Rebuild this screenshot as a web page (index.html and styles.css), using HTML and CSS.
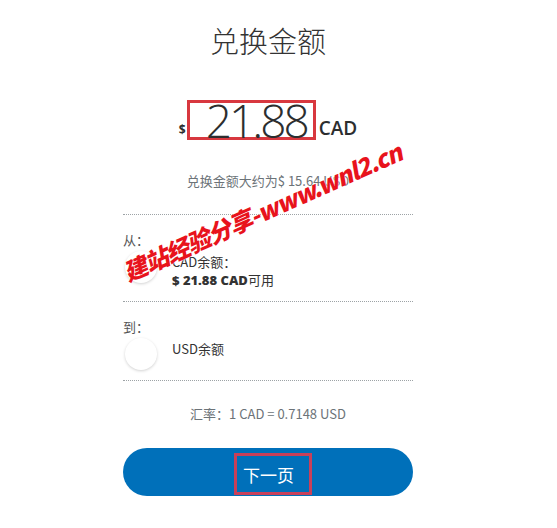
FILE: index.html
```html
<!DOCTYPE html>
<html lang="zh-CN">

<head>
    <meta charset="UTF-8">
    <meta name="viewport" content="width=device-width, initial-scale=1.0">
    <title>兑换金额</title>
    <link rel="stylesheet" href="styles.css">
</head>

<body>
    <div class="container">

        <!-- title -->
        <h1 class="title">兑换金额</h1>

        <!-- amount -->
        <div class="amount">
            <span class="currency-sign">$</span>
            <span class="amount-value mark">21.88</span>
            <span class="currency-code">CAD</span>
        </div>
        <p class="estimate">兑换金额大约为$ 15.64 USD</p>

        <!-- from -->
        <div class="section">
            <p class="label">从：</p>
            <div class="balance">
                <span class="flag"></span>
                <div class="balance-text">
                    <span>CAD余额：</span>
                    <span class="available"><strong>$ 21.88 CAD</strong>可用</span>
                </div>
            </div>
        </div>

        <!-- to -->
        <div class="section">
            <p class="label">到：</p>
            <div class="balance">
                <span class="flag"></span>
                <div class="balance-text">
                    <span>USD余额</span>
                </div>
            </div>
        </div>

        <p class="rate">汇率：1 CAD = 0.7148 USD</p>

        <!-- next button -->
        <button class="next-button" type="button"><span class="mark">下一页</span></button>

        <!-- watermark -->
        <div class="watermark">建站经验分享-www.wnl2.cn</div>
    </div>
</body>

</html>
```

FILE: styles.css
```css
body {
    margin: 0;
    background: #fff;
    font-family: 'Noto Sans CJK SC', 'Open Sans', sans-serif;
    color: #2c2e2f;
}

.container {
    position: relative;
    width: 290px;
    margin-left: 123px;
    padding-top: 18px;
}

.title {
    margin: 0;
    height: 44px;
    font-size: 29px;
    font-weight: 300;
    line-height: 44px;
    text-align: center;
    color: #333;
}

.amount {
    display: flex;
    justify-content: center;
    align-items: baseline;
    margin-top: 38px;
    height: 40px;
    font-family: 'Open Sans', sans-serif;
}

.currency-sign {
    font-size: 12px;
    font-weight: 700;
    margin-right: 1px;
    position: relative;
    top: -4px;
}

.amount-value {
    font-size: 46px;
    font-weight: 300;
    line-height: 34px;
    padding: 0 6px 0 16px;
    letter-spacing: -3px;
}

.currency-code {
    font-size: 19px;
    font-weight: 600;
    margin-left: 3px;
    position: relative;
    top: -3px;
}

/* red highlight box */
.mark {
    border: 3px solid #d8383f;
}

.estimate {
    margin: 32px 0 0;
    padding-bottom: 24px;
    font-size: 13px;
    line-height: 18px;
    text-align: center;
    color: #6c7378;
    border-bottom: 1px dotted #9da3a6;
}

.section {
    padding: 16px 0 12px;
    border-bottom: 1px dotted #9da3a6;
}

.section + .section {
    padding-bottom: 10px;
}

.label {
    margin: 0 0 2px;
    font-size: 13px;
    line-height: 18px;
    color: #555;
}

.balance {
    display: flex;
    align-items: flex-start;
    gap: 15px;
    padding-left: 2px;
}

.flag {
    flex: none;
    width: 32px;
    height: 32px;
    border-radius: 50%;
    background: #fff;
    box-shadow: 0 1px 3px rgba(0, 0, 0, 0.18);
}

.balance-text {
    display: flex;
    flex-direction: column;
    padding-top: 2px;
    font-size: 13px;
    line-height: 18px;
    color: #333;
}

.available strong {
    font-family: 'Open Sans', sans-serif;
    font-weight: 800;
}

.rate {
    margin: 24px 0 0;
    font-size: 13px;
    line-height: 18px;
    text-align: center;
    color: #6c7378;
}

.next-button {
    display: flex;
    justify-content: center;
    align-items: stretch;
    width: 100%;
    height: 48px;
    margin-top: 25px;
    border: none;
    border-radius: 24px;
    background: #0070ba;
    padding: 5px 0 1px;
    cursor: pointer;
}

.next-button .mark {
    display: flex;
    align-items: center;
    padding: 0 15px 0 6px;
    margin-left: 10px;
    border-color: #c9405a;
    color: #fff;
    font-family: 'Noto Sans CJK SC', sans-serif;
    font-size: 17px;
}

.watermark {
    position: absolute;
    left: 1px;
    top: 255px;
    transform: rotate(-24deg);
    transform-origin: left center;
    white-space: nowrap;
    font-family: 'Noto Sans CJK SC', sans-serif;
    font-size: 24px;
    font-weight: 900;
    font-style: italic;
    letter-spacing: -1px;
    color: #e8131c;
    text-shadow: 0 0 2px #fff;
}
```
